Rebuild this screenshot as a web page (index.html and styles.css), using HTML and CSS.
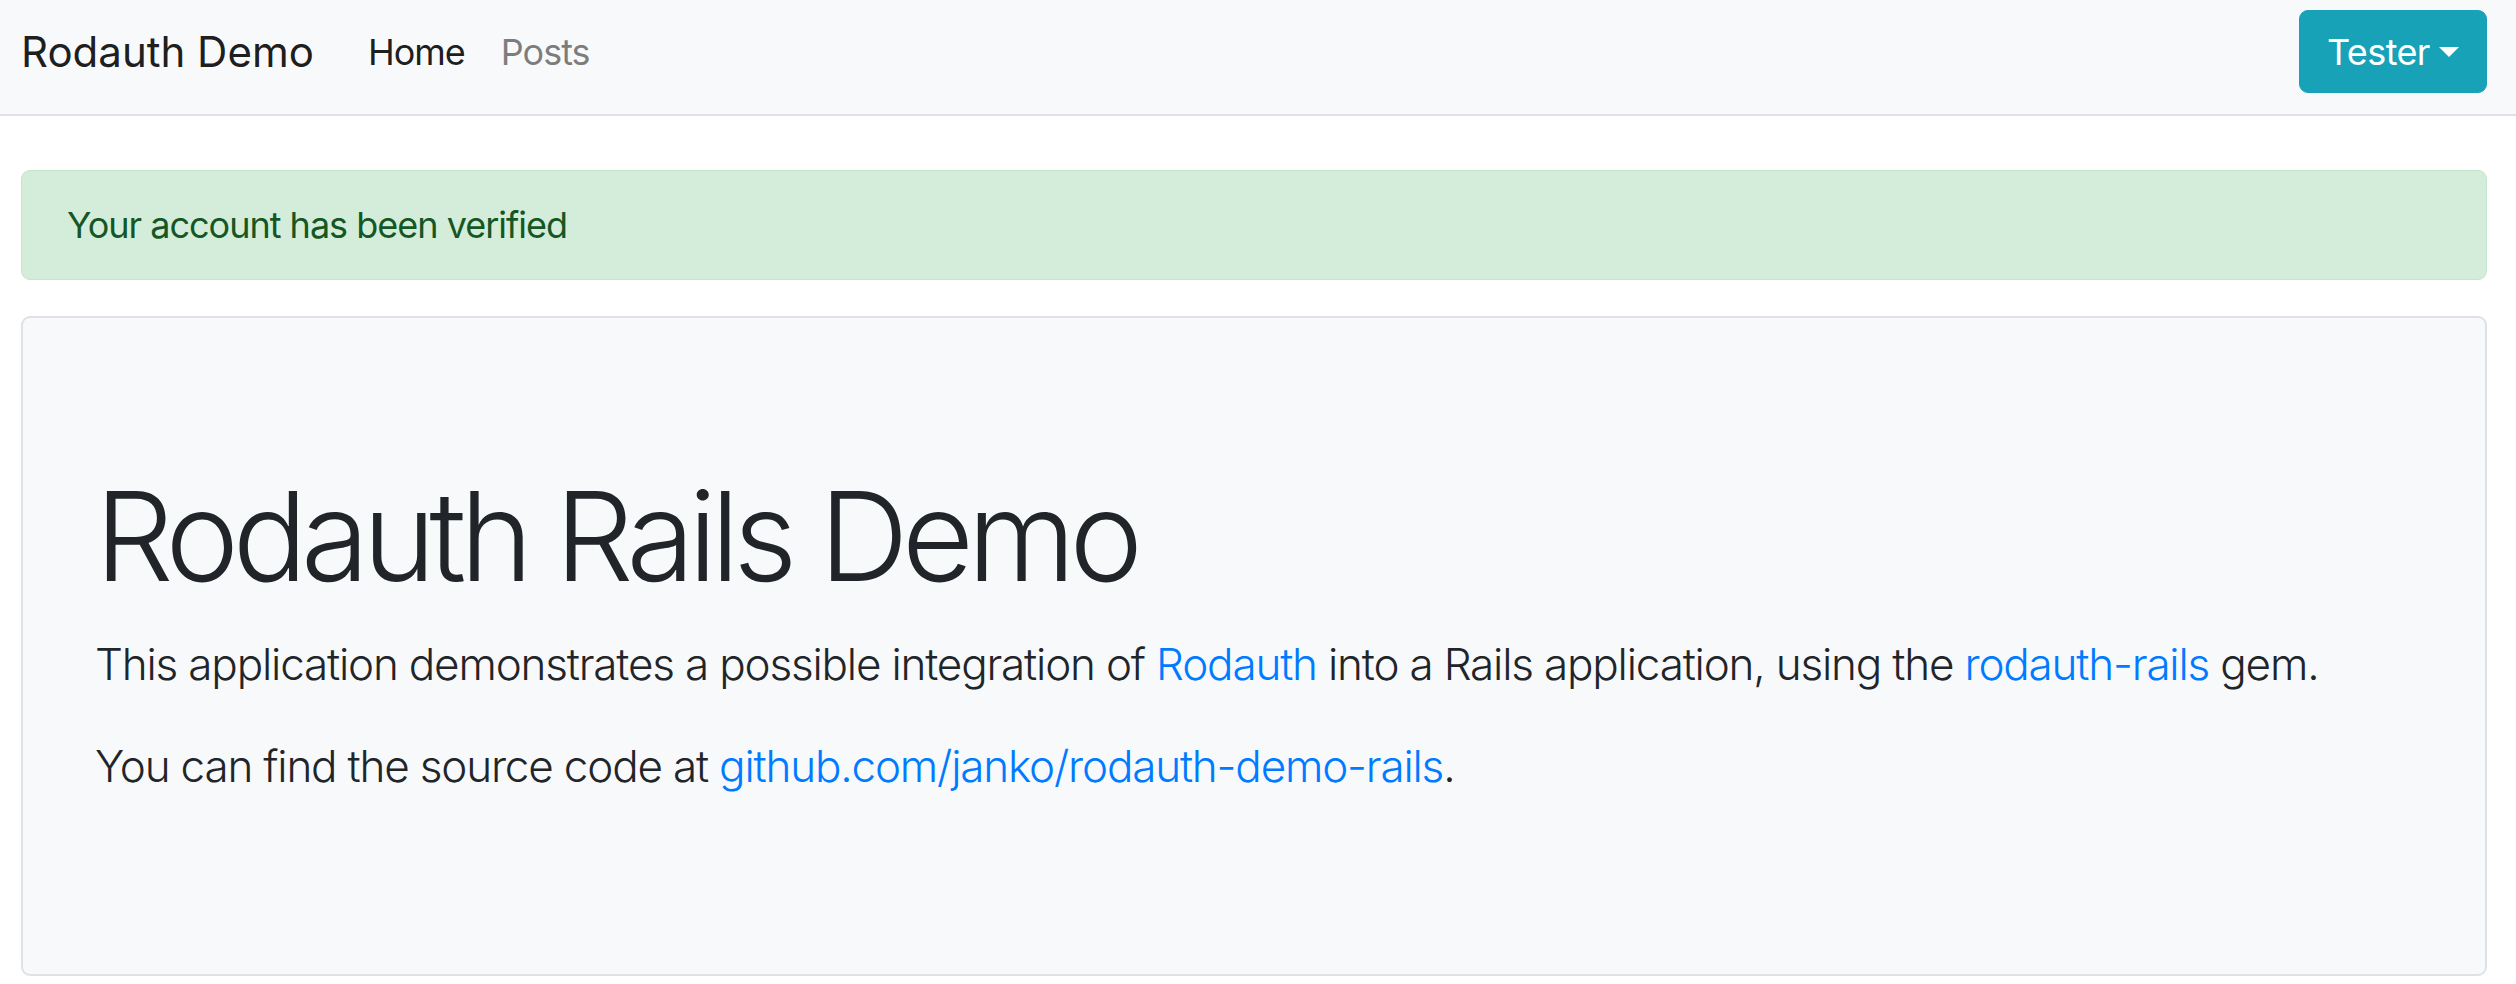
FILE: index.html
```html
<!DOCTYPE html>
<html lang="en">
<head>
<meta charset="utf-8">
<title>Rodauth Demo</title>
<link rel="stylesheet" href="styles.css">
</head>
<body>
<nav class="navbar">
  <a class="brand" href="#">Rodauth Demo</a>
  <ul class="nav">
    <li><a class="nav-link active" href="#">Home</a></li>
    <li><a class="nav-link" href="#">Posts</a></li>
  </ul>
  <button class="btn-info dropdown-toggle" type="button">Tester</button>
</nav>
<main class="container">
  <div class="alert">Your account has been verified</div>
  <section class="jumbotron">
    <h1 class="display">Rodauth Rails Demo</h1>
    <p class="lead">This application demonstrates a possible integration of <a href="#">Rodauth</a> into a Rails application, using the <a href="#">rodauth-rails</a> gem.</p>
    <p class="lead">You can find the source code at <a href="#">github.com/janko/rodauth-demo-rails</a>.</p>
  </section>
</main>
</body>
</html>
```
FILE: styles.css
```css
* { box-sizing: border-box; }
html, body { margin: 0; padding: 0; }
body {
  font-family: Inter, "Liberation Sans", Arial, sans-serif;
  font-size: 36px;
  line-height: 1.5;
  color: #212529;
  background: #fff;
}
a { color: #007bff; text-decoration: none; }

.navbar {
  display: flex;
  align-items: center;
  padding: 10px 29px 21px 21px;
  background: #f8f9fa;
  border-bottom: 2px solid #dee2e6;
}
.brand {
  color: rgba(0,0,0,.9);
  font-size: 42px;
  line-height: 1.5;
  margin-right: 36px;
}
.nav {
  display: flex;
  list-style: none;
  margin: 0;
  padding: 0;
  flex: 1;
}
.nav-link {
  display: block;
  padding: 0 18px;
  color: rgba(0,0,0,.5);
  font-size: 36px;
  letter-spacing: -1px;
}
.nav-link.active { color: rgba(0,0,0,.9); }

.btn-info {
  font-family: inherit;
  font-size: 36px;
  line-height: 54px;
  color: #fff;
  background: #17a2b8;
  border: 1px solid #17a2b8;
  border-radius: 9px;
  padding: 13.5px 27px;
  cursor: pointer;
  display: inline-flex;
  align-items: center;
  letter-spacing: -0.6px;
}
.dropdown-toggle::after {
  content: "";
  display: inline-block;
  margin-left: .255em;
  border-top: .3em solid;
  border-right: .3em solid transparent;
  border-left: .3em solid transparent;
  border-bottom: 0;
}

.container {
  padding: 54px 29px 0 21px;
}
.alert {
  color: #155724;
  background: #d4edda;
  border: 1px solid #c3e6cb;
  border-radius: 9px;
  padding: 27px 45px;
  margin-bottom: 36px;
  letter-spacing: -1px;
}
.jumbotron {
  background: #f8f9fa;
  border: 2px solid #dee2e6;
  border-radius: 9px;
  padding: 144px 72px 139px;
}
.display {
  font-size: 124px;
  font-weight: 300;
  line-height: 1.2;
  margin: 0 0 20px;
  letter-spacing: -6.4px;
}
.lead {
  font-size: 44px;
  font-weight: 300;
  margin: 0 0 36px;
  letter-spacing: -1.18px;
}
```
